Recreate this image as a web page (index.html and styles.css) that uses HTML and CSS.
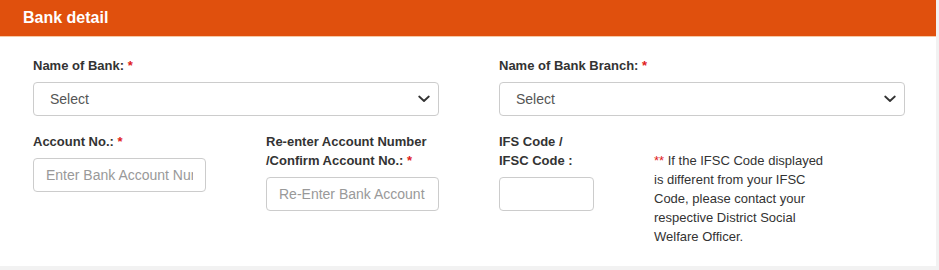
FILE: index.html
```html
<!DOCTYPE html>
<html>
<head>
<meta charset="utf-8">
<link rel="stylesheet" href="styles.css">
</head>
<body>
<div class="card">
  <div class="card-header">Bank detail</div>
  <div class="card-body">
    <div class="row row-top">
      <div class="field half">
        <label class="lbl">Name of Bank: <span class="req">*</span></label>
        <div class="select">
          <span>Select</span>
          <svg class="chev" width="12" height="8" viewBox="0 0 12 8"><path d="M1.2 1.5 L6 6 L10.8 1.5" fill="none" stroke="#333" stroke-width="1.8" stroke-linecap="round" stroke-linejoin="round"/></svg>
        </div>
      </div>
      <div class="field half">
        <label class="lbl">Name of Bank Branch: <span class="req">*</span></label>
        <div class="select">
          <span>Select</span>
          <svg class="chev" width="12" height="8" viewBox="0 0 12 8"><path d="M1.2 1.5 L6 6 L10.8 1.5" fill="none" stroke="#333" stroke-width="1.8" stroke-linecap="round" stroke-linejoin="round"/></svg>
        </div>
      </div>
    </div>
    <div class="row row-bottom">
      <div class="field quarter">
        <label class="lbl">Account No.: <span class="req">*</span></label>
        <div class="input"><span class="ph">Enter Bank Account Number</span></div>
      </div>
      <div class="field quarter">
        <label class="lbl">Re-enter Account Number<br>/Confirm Account No.: <span class="req">*</span></label>
        <div class="input"><span class="ph">Re-Enter Bank Account Number</span></div>
      </div>
      <div class="field ifsc">
        <label class="lbl">IFS Code /<br>IFSC Code :</label>
        <div class="input small"></div>
      </div>
      <p class="note"><span class="req">**</span> If the IFSC Code displayed is different from your IFSC Code, please contact your respective District Social Welfare Officer.</p>
    </div>
  </div>
</div>
</body>
</html>
```
FILE: styles.css
```css
html, body {
  margin: 0;
  padding: 0;
  background: #f2f2f2;
  font-family: "Liberation Sans", Arial, sans-serif;
  color: #333;
}
.card {
  width: 936px;
  background: #fff;
  height: 266px;
  box-sizing: border-box;
}
.card-header {
  background: #e0500d;
  color: #fff;
  font-weight: bold;
  font-size: 16px;
  height: 36px;
  line-height: 36px;
  padding-left: 23px;
  border-bottom: 1px solid #f6c9a4;
}
.card-body {
  padding: 19px 0 0 33px;
}
.row {
  display: flex;
}
.row-top {
  gap: 60px;
}
.row-bottom {
  margin-top: 16px;
  gap: 60px;
}
.field {
  display: flex;
  flex-direction: column;
}
.half { width: 406px; }
.quarter { width: 173px; }
.ifsc { width: 95px; }
.lbl {
  font-weight: bold;
  font-size: 13px;
  line-height: 19px;
  margin-bottom: 7px;
}
.req { color: #e02020; }
.select {
  height: 34px;
  box-sizing: border-box;
  border: 1px solid #ccc;
  border-radius: 4px;
  display: flex;
  align-items: center;
  justify-content: space-between;
  padding: 0 8px 0 16px;
  font-size: 14px;
  color: #555;
}
.chev { display: block; }
.input {
  height: 34px;
  box-sizing: border-box;
  border: 1px solid #ccc;
  border-radius: 4px;
  display: flex;
  align-items: center;
  padding: 0 12px;
  overflow: hidden;
  white-space: nowrap;
  font-size: 14px;
}
.ph {
  color: #999;
  overflow: hidden;
}
.note {
  margin: 19px 0 0 0;
  width: 176px;
  font-size: 13px;
  line-height: 19px;
  color: #333;
}
```
